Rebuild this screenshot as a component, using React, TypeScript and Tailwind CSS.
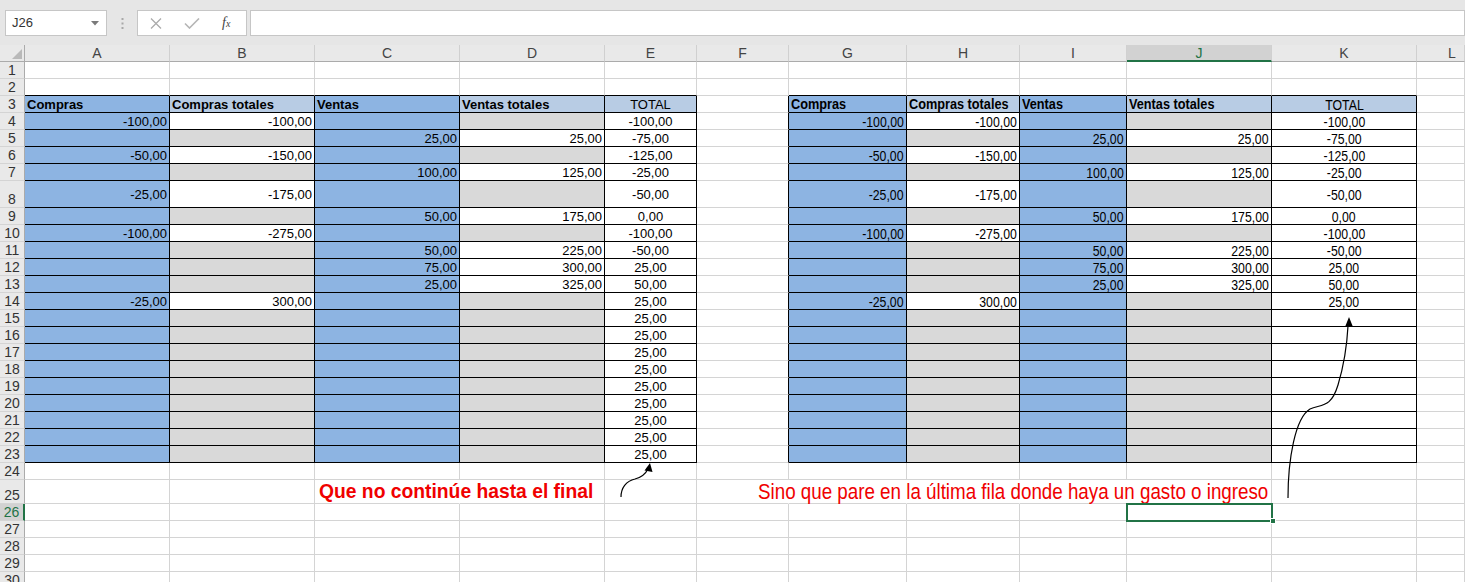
import React from 'react';

type Row5 = [string, string, string, string, string];

const DATA: Record<number, Row5> = {
  4: ['-100,00', '-100,00', '', '', '-100,00'],
  5: ['', '', '25,00', '25,00', '-75,00'],
  6: ['-50,00', '-150,00', '', '', '-125,00'],
  7: ['', '', '100,00', '125,00', '-25,00'],
  8: ['-25,00', '-175,00', '', '', '-50,00'],
  9: ['', '', '50,00', '175,00', '0,00'],
  10: ['-100,00', '-275,00', '', '', '-100,00'],
  11: ['', '', '50,00', '225,00', '-50,00'],
  12: ['', '', '75,00', '300,00', '25,00'],
  13: ['', '', '25,00', '325,00', '50,00'],
  14: ['-25,00', '300,00', '', '', '25,00'],
};

const COLS = ['A', 'B', 'C', 'D', 'E', 'F', 'G', 'H', 'I', 'J', 'K', 'L'];
const HEADERS = ['Compras', 'Compras totales', 'Ventas', 'Ventas totales', 'TOTAL'];

function rowHeight(r: number) {
  if (r === 8) return 'h-[27px]';
  if (r === 25) return 'h-[24px]';
  return 'h-[17px]';
}

function getRow(r: number): Row5 {
  if (DATA[r]) return DATA[r];
  return ['', '', '', '', '25,00'];
}

function Txt({ narrow, origin, bold, children }: { narrow: boolean; origin: 'l' | 'r' | 'c'; bold?: boolean; children: React.ReactNode }) {
  if (!narrow) {
    return (
      <span className={`font-['Liberation_Sans',Arial,sans-serif] text-[13px] leading-none ${bold ? 'font-bold' : ''}`}>
        {children}
      </span>
    );
  }
  const o = origin === 'l' ? 'origin-left' : origin === 'r' ? 'origin-right' : 'origin-center';
  return (
    <span
      className={`inline-block scale-x-[0.82] ${o} font-['Liberation_Sans',Arial,sans-serif] ${
        bold ? 'font-bold text-[15.5px]' : 'text-[15px]'
      } leading-none`}
    >
      {children}
    </span>
  );
}

function TableCell({ r, idx, narrow, right }: { r: number; idx: number; narrow: boolean; right: boolean }) {
  const h = rowHeight(r);
  if (r === 3) {
    const bg = idx === 0 || idx === 2 ? 'bg-[#8db4e2]' : 'bg-[#b8cce4]';
    const isTotal = idx === 4;
    return (
      <div
        className={`${h} ${bg} border-r border-b border-black flex items-center overflow-visible whitespace-nowrap text-black ${
          isTotal ? 'justify-center' : 'justify-start pl-[2px]'
        }`}
      >
        <Txt narrow={narrow} origin={isTotal ? 'c' : 'l'} bold={!isTotal}>
          {HEADERS[idx]}
        </Txt>
      </div>
    );
  }
  const row = getRow(r);
  let val = row[idx];
  if (right && idx === 4 && r > 14) val = '';
  let bg = 'bg-white';
  if (idx === 0 || idx === 2) bg = 'bg-[#8db4e2]';
  else if (idx === 1 || idx === 3) bg = val ? 'bg-white' : 'bg-[#d9d9d9]';
  return (
    <div
      className={`${h} ${bg} border-r border-b border-black flex items-center whitespace-nowrap text-black ${
        idx === 4 ? 'justify-center' : 'justify-end pr-[2px]'
      }`}
    >
      {val ? (
        <Txt narrow={narrow} origin={idx === 4 ? 'c' : 'r'}>
          {val}
        </Txt>
      ) : null}
    </div>
  );
}

function Cell({ r, c }: { r: number; c: number }) {
  const h = rowHeight(r);
  if (r >= 3 && r <= 23 && c >= 1 && c <= 5) {
    return <TableCell r={r} idx={c - 1} narrow={false} right={false} />;
  }
  if (r >= 3 && r <= 23 && c >= 7 && c <= 11) {
    return <TableCell r={r} idx={c - 7} narrow={true} right={true} />;
  }
  let extra = '';
  if (r === 2 && ((c >= 1 && c <= 5) || (c >= 7 && c <= 11))) extra += ' border-b-black';
  if (c === 6 && r >= 3 && r <= 23) extra += ' border-r-black';
  if (r === 25 && (c === 3 || (c >= 6 && c <= 9))) extra += ' border-r-white';

  if (r === 25 && c === 3) {
    return (
      <div className={`${h} border-r border-b border-[#d4d4d4]${extra} flex items-center pl-[4px] overflow-visible whitespace-nowrap`}>
        <span className="relative z-10 font-['Liberation_Sans',Arial,sans-serif] font-bold text-[19.3px] leading-none text-[#f00000]">
          Que no continúe hasta el final
        </span>
      </div>
    );
  }
  if (r === 25 && c === 10) {
    return (
      <div className={`${h} border-r border-b border-[#d4d4d4]${extra} flex items-center justify-end pr-[3px] overflow-visible whitespace-nowrap`}>
        <span className="relative z-10 inline-block scale-x-[0.82] origin-right font-['Liberation_Sans',Arial,sans-serif] text-[22.9px] leading-none text-[#f00000]">
          Sino que pare en la última fila donde haya un gasto o ingreso
        </span>
      </div>
    );
  }
  if (r === 26 && c === 10) {
    return (
      <div className={`${h} border-r border-b border-[#d4d4d4] relative`}>
        <div className="absolute -left-[1px] -top-[1px] w-[147px] h-[19px] border-2 border-[#217346] z-20" />
        <div className="absolute left-[143px] top-[14px] w-[6px] h-[6px] bg-[#217346] border border-white z-30" />
      </div>
    );
  }
  return <div className={`${h} border-r border-b border-[#d4d4d4]${extra}`} />;
}

function RowHeader({ r }: { r: number }) {
  const h = rowHeight(r);
  const sel = r === 26;
  return (
    <div
      className={`${h} border-b border-[#d4d4d4] flex items-end justify-center font-['Liberation_Sans',Arial,sans-serif] text-[14px] leading-[16px] ${
        sel
          ? 'bg-[#d2d2d2] text-[#217346] border-r-2 border-r-[#217346]'
          : 'bg-[#e9e9e9] text-[#333] border-r border-r-[#ababab]'
      }`}
    >
      {r}
    </div>
  );
}

export default function App() {
  const rows: number[] = [];
  for (let i = 1; i <= 30; i++) rows.push(i);

  return (
    <div className="relative w-[1465px] h-[582px] overflow-hidden bg-white select-none">
      {/* Formula bar */}
      <div className="h-[45px] bg-[#e6e6e6] flex items-start pt-[10px]">
        <div className="ml-[5px] w-[102px] h-[26px] bg-white border border-[#c6c6c6] flex items-center justify-between pl-[6px] pr-[7px]">
          <span className="font-['Liberation_Sans',Arial,sans-serif] text-[13px] text-[#333]">J26</span>
          <svg width="8" height="5" viewBox="0 0 8 5">
            <polygon points="0,0 8,0 4,4.5" fill="#7a7a7a" />
          </svg>
        </div>
        <div className="w-[30px] h-[26px] flex items-center justify-center">
          <svg width="3" height="11" viewBox="0 0 3 11">
            <rect x="0.5" y="0" width="2" height="2" fill="#a8a8a8" />
            <rect x="0.5" y="4.5" width="2" height="2" fill="#a8a8a8" />
            <rect x="0.5" y="9" width="2" height="2" fill="#a8a8a8" />
          </svg>
        </div>
        <div className="w-[110px] h-[26px] bg-white border border-[#c6c6c6] flex items-center">
          <svg className="ml-[12px]" width="12" height="11" viewBox="0 0 12 11">
            <path d="M1 0.5 L11 10.5 M11 0.5 L1 10.5" stroke="#ababab" strokeWidth="1.3" fill="none" />
          </svg>
          <svg className="ml-[22px]" width="16" height="11" viewBox="0 0 16 11">
            <path d="M1 5.5 L5.5 10 L15 0.5" stroke="#b5b5b5" strokeWidth="1.6" fill="none" />
          </svg>
          <span className="ml-[22px] font-['Liberation_Serif','Times_New_Roman',serif] italic text-[14px] text-[#444] leading-none">
            f<span className="text-[10px]">x</span>
          </span>
        </div>
        <div className="ml-[3px] flex-1 h-[26px] bg-white border border-[#c6c6c6]" />
      </div>

      {/* Grid */}
      <div className="grid grid-cols-[25px_145px_145px_145px_145px_92px_92px_118px_113px_107px_145px_145px_1fr]">
        <div className="h-[17px] bg-[#e9e9e9] border-r border-b border-[#ababab] relative">
          <svg className="absolute right-[2px] bottom-[2px]" width="10" height="10" viewBox="0 0 10 10">
            <polygon points="10,0 10,10 0,10" fill="#b9b9b9" />
          </svg>
        </div>
        {COLS.map((col, i) => {
          const sel = col === 'J';
          return (
            <div
              key={col}
              className={`h-[17px] border-r border-r-[#d0d0d0] flex items-center font-['Liberation_Sans',Arial,sans-serif] text-[14px] leading-none ${
                sel
                  ? 'bg-[#d2d2d2] text-[#217346] border-b-2 border-b-[#217346]'
                  : 'bg-[#e9e9e9] text-[#444] border-b border-b-[#ababab]'
              } ${i === COLS.length - 1 ? 'justify-start pl-[31px]' : 'justify-center'}`}
            >
              {col}
            </div>
          );
        })}

        {rows.map((r) => (
          <React.Fragment key={r}>
            <RowHeader r={r} />
            {COLS.map((_, ci) => (
              <Cell key={ci} r={r} c={ci + 1} />
            ))}
          </React.Fragment>
        ))}
      </div>

      <svg
        className="absolute left-0 top-0 pointer-events-none z-40"
        width="1465"
        height="582"
        viewBox="0 0 1465 582"
      >
        <path d="M621,497 C621,488 626,481 635,479 C643,477 646,473 648,469" stroke="#000" strokeWidth="1.2" fill="none" />
        <polygon points="650,463 644.5,470.5 652.5,472" fill="#000" />
        <path
          d="M1288,498 C1288,460 1295,418 1310,409 C1322,404 1331,408 1338,385 C1344,365 1347,345 1348,326"
          stroke="#000"
          strokeWidth="1.2"
          fill="none"
        />
        <polygon points="1349,317 1345,327 1353,327" fill="#000" />
      </svg>
    </div>
  );
}
